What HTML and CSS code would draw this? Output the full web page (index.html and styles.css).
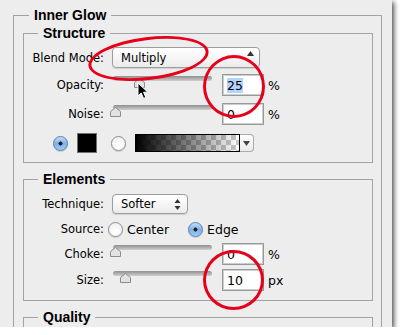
FILE: index.html
```html
<!DOCTYPE html>
<html lang="en">
<head>
    <meta charset="UTF-8">
    <title>Inner Glow</title>
    <link rel="stylesheet" href="styles.css">
</head>
<body>
    <div class="panel">
        <fieldset class="group outer">
            <legend>Inner Glow</legend>

            <fieldset class="group inner structure">
                <legend>Structure</legend>
                <div class="row row-popup">
                    <span class="lbl">Blend Mode:</span>
                    <div class="popup popup-blend">
                        <span>Multiply</span>
                        <svg class="arrow-up" width="7" height="5"><path d="M0 5 L3.5 0 L7 5 Z" fill="#333"/></svg>
                    </div>
                </div>
                <div class="row row-slider row-opacity">
                    <span class="lbl">Opacity:</span>
                    <div class="slider">
                        <div class="track"></div>
                        <svg class="thumb" style="left: 24px" width="11" height="10"><path d="M0.5 9.5 V4.5 L5.5 0.5 L10.5 4.5 V9.5 Z" fill="#e2e2e2" stroke="#8c8c8c"/></svg>
                    </div>
                    <div class="field"><span class="sel">25</span></div>
                    <span class="unit">%</span>
                </div>
                <div class="row row-slider row-noise">
                    <span class="lbl">Noise:</span>
                    <div class="slider">
                        <div class="track"></div>
                        <svg class="thumb" style="left: 0px" width="11" height="10"><path d="M0.5 9.5 V4.5 L5.5 0.5 L10.5 4.5 V9.5 Z" fill="#e2e2e2" stroke="#8c8c8c"/></svg>
                    </div>
                    <div class="field">0</div>
                    <span class="unit">%</span>
                </div>
                <div class="row row-color">
                    <span class="radio checked"></span>
                    <span class="swatch"></span>
                    <span class="radio radio-grad"></span>
                    <span class="gradient"></span>
                    <span class="grad-btn"><svg width="7" height="5"><path d="M0 0 L7 0 L3.5 5 Z" fill="#444"/></svg></span>
                </div>
            </fieldset>

            <fieldset class="group inner elements">
                <legend>Elements</legend>
                <div class="row row-tech">
                    <span class="lbl">Technique:</span>
                    <div class="popup popup-tech">
                        <span>Softer</span>
                        <svg class="arrows" width="7" height="11"><path d="M0.5 4 L3.5 0 L6.5 4 Z M0.5 7 L3.5 11 L6.5 7 Z" fill="#333"/></svg>
                    </div>
                </div>
                <div class="row row-source">
                    <span class="lbl">Source:</span>
                    <span class="radio"></span>
                    <span class="opt">Center</span>
                    <span class="radio checked"></span>
                    <span class="opt">Edge</span>
                </div>
                <div class="row row-slider row-choke">
                    <span class="lbl">Choke:</span>
                    <div class="slider">
                        <div class="track"></div>
                        <svg class="thumb" style="left: 0px" width="11" height="10"><path d="M0.5 9.5 V4.5 L5.5 0.5 L10.5 4.5 V9.5 Z" fill="#e2e2e2" stroke="#8c8c8c"/></svg>
                    </div>
                    <div class="field">0</div>
                    <span class="unit">%</span>
                </div>
                <div class="row row-slider row-size">
                    <span class="lbl">Size:</span>
                    <div class="slider">
                        <div class="track"></div>
                        <svg class="thumb" style="left: 10px" width="11" height="10"><path d="M0.5 9.5 V4.5 L5.5 0.5 L10.5 4.5 V9.5 Z" fill="#e2e2e2" stroke="#8c8c8c"/></svg>
                    </div>
                    <div class="field">10</div>
                    <span class="unit">px</span>
                </div>
            </fieldset>

            <fieldset class="group inner quality">
                <legend>Quality</legend>
                <div class="row"></div>
            </fieldset>
        </fieldset>

        <!-- annotations drawn over the dialog -->
        <span class="mark mark-blend"></span>
        <span class="mark mark-opacity"></span>
        <span class="mark mark-size"></span>
        <svg class="cursor" width="13" height="18"><path d="M1 1 L1 14 L4.2 11 L6.6 16.4 L8.8 15.4 L6.5 10.2 L10.8 10.2 Z" fill="#000" stroke="#fff" stroke-width="1" stroke-linejoin="round"/></svg>
    </div>
</body>
</html>
```

FILE: styles.css
```css
body {
    margin: 0;
    background-color: #fff;
    font-family: "DejaVu Sans", sans-serif;
    font-size: 11.5px;
    color: #000;
}
.panel {
    position: relative;
    width: 369px;
    height: 320px;
    padding: 7px 10px 0 13px;
    background-color: #ededed;
    box-shadow: 2px 2px 5px rgba(0, 0, 0, 0.7);
    overflow: hidden;
}
.group {
    margin: 0;
    min-width: 0;
    border: 1px solid #a3a3a3;
}
.group legend {
    padding: 0 5px;
    font-family: "Liberation Sans", sans-serif;
    font-weight: bold;
    font-size: 14px;
    line-height: 16px;
}
.outer {
    padding: 0 8px 10px 9px;
}
.outer > legend {
    margin-left: 6px;
}
.inner {
    padding: 0 0 9px 0;
}
.inner > legend {
    margin-left: 14px;
}
.structure {
    margin-top: 2px;
}
.elements,
.quality {
    margin-top: 8px;
}
.row {
    display: flex;
    align-items: center;
}
.lbl {
    width: 80px;
    text-align: right;
    flex-shrink: 0;
}
.row-popup {
    margin-top: 6px;
    height: 21px;
}
.popup {
    display: flex;
    align-items: center;
    justify-content: space-between;
    box-sizing: border-box;
    margin-left: 8px;
    padding: 0 7px 0 8px;
    border: 1px solid #9d9d9d;
    border-radius: 4px;
    background: linear-gradient(#ffffff, #f6f6f6 50%, #ebebeb);
    box-shadow: 0 1px 1px rgba(0, 0, 0, 0.12);
}
.popup-blend {
    width: 148px;
    height: 21px;
    padding-right: 5px;
}
.popup-blend .arrow-up {
    margin-top: -8px;
}
.popup-tech {
    width: 76px;
    height: 20px;
    padding-right: 6px;
}
.row-slider {
    height: 22px;
}
.row-opacity {
    margin-top: 6px;
}
.row-noise {
    margin-top: 7px;
}
.slider {
    position: relative;
    align-self: flex-start;
    width: 102px;
    height: 14px;
    margin: 1px 0 0 6px;
}
.track {
    margin: 1px 0 0 3px;
    width: 99px;
    height: 5px;
    border-radius: 3px;
    background: linear-gradient(#8f8f8f, #b5b5b5 60%, #cfcfcf);
}
.thumb {
    position: absolute;
    top: 3px;
}
.field {
    box-sizing: border-box;
    width: 42px;
    height: 22px;
    margin-left: 10px;
    padding: 3px 0 0 4px;
    border: 1px solid #999;
    background-color: #fff;
    box-shadow: inset 0 0 0 1px #cdcdcd;
    font-size: 12.5px;
    line-height: 15px;
}
.sel {
    background-color: #b3d4fc;
}
.unit {
    margin-left: 4px;
    font-size: 12.5px;
}
.row-color {
    margin-top: 8px;
    height: 20px;
    padding-left: 29px;
}
.radio {
    box-sizing: border-box;
    width: 15px;
    height: 15px;
    border: 1px solid #8d8d8d;
    border-radius: 50%;
    background: radial-gradient(circle at 50% 70%, #ffffff, #ececec);
    box-shadow: 0 1px 1px rgba(0, 0, 0, 0.15);
    flex-shrink: 0;
}
.radio.checked {
    border-color: #5a7fae;
    background: radial-gradient(circle, #222 0 1.8px, transparent 2.3px),
        linear-gradient(#c4ddf8, #7fb2ea 50%, #9dcaf6);
}
.swatch {
    box-sizing: border-box;
    width: 20px;
    height: 20px;
    margin-left: 9px;
    border: 1px solid #707070;
    background-color: #000;
}
.radio-grad {
    margin-left: 14px;
}
.gradient {
    box-sizing: border-box;
    width: 105px;
    height: 18px;
    margin-left: 9px;
    border: 1px solid #000;
    background: linear-gradient(to right, #000, rgba(0, 0, 0, 0)),
        repeating-conic-gradient(#c9c9c9 0 25%, #fff 0 50%) 0 0 / 10px 10px;
}
.grad-btn {
    display: flex;
    align-items: center;
    justify-content: center;
    box-sizing: border-box;
    width: 14px;
    height: 18px;
    border: 1px solid #ababab;
    border-left: none;
    border-radius: 0 4px 4px 0;
    background: linear-gradient(#fff, #ebebeb);
}
.row-tech {
    margin-top: 7px;
    height: 20px;
}
.row-source {
    margin-top: 7px;
    height: 16px;
}
.row-source .radio {
    margin-left: 4px;
}
.row-source .opt {
    margin-left: 4px;
    font-size: 12.5px;
}
.row-source .radio.checked {
    margin-left: 19px;
}
.row-choke {
    margin-top: 6px;
}
.row-size {
    margin-top: 4px;
}
.quality .row {
    height: 20px;
}
.mark {
    position: absolute;
    box-sizing: border-box;
    border: 3px solid #e6001a;
    border-radius: 50%;
}
.mark-blend {
    left: 88px;
    top: 37px;
    width: 121px;
    height: 43px;
    transform: rotate(-7deg);
}
.mark-opacity {
    left: 203px;
    top: 55px;
    width: 62px;
    height: 63px;
}
.mark-size {
    left: 203px;
    top: 250px;
    width: 61px;
    height: 60px;
}
.cursor {
    position: absolute;
    left: 137px;
    top: 82px;
}
```
